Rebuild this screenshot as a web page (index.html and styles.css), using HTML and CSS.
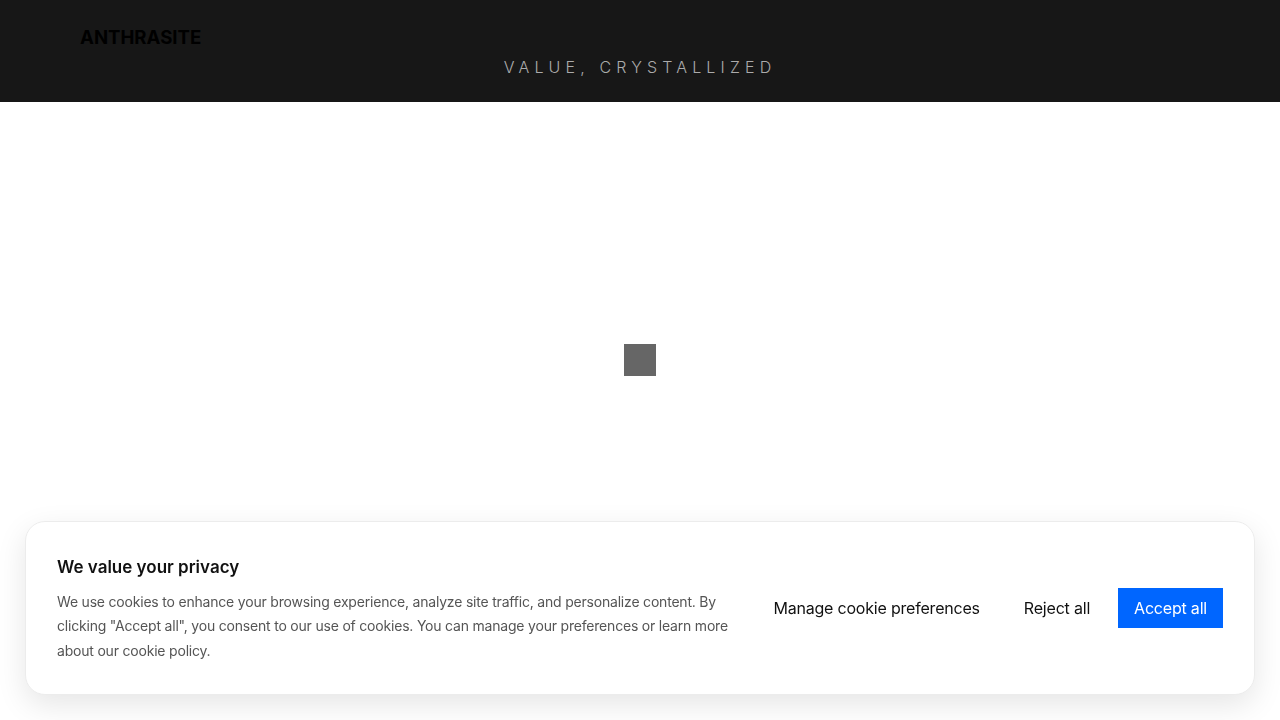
FILE: index.html
```html
<!DOCTYPE html>
<html lang="en">
<head>
<meta charset="utf-8">
<title>Anthrasite</title>
<link rel="stylesheet" href="styles.css">
</head>
<body>
<header class="site-header">
  <div class="logo">ANTHRASITE</div>
  <div class="tagline">VALUE, CRYSTALLIZED</div>
</header>
<main class="main">
  <div class="loader"></div>
</main>
<section class="cookie-banner">
  <div class="cookie-text">
    <h2 class="cookie-title">We value your privacy</h2>
    <p class="cookie-body">We use cookies to enhance your browsing experience, analyze site traffic, and personalize content. By clicking "Accept all", you consent to our use of cookies. You can manage your preferences or learn more about our cookie policy.</p>
  </div>
  <div class="cookie-actions">
    <button class="btn btn-link">Manage cookie preferences</button>
    <button class="btn btn-link">Reject all</button>
    <button class="btn btn-primary">Accept all</button>
  </div>
</section>
</body>
</html>
```
FILE: styles.css
```css
* { box-sizing: border-box; }
html, body { margin: 0; padding: 0; }
body {
  font-family: Inter, "Noto Sans", sans-serif;
  background: #fff;
  color: #111;
  height: 720px;
  overflow: hidden;
}
.site-header {
  background: #171717;
  height: 102px;
  padding: 24px 80px 0;
}
.logo {
  font-size: 18.6px;
  font-weight: 700;
  line-height: 27px;
  color: #000;
}
.tagline {
  margin-top: 4px;
  text-align: center;
  font-size: 16px;
  font-weight: 300;
  line-height: 24px;
  letter-spacing: 5.15px;
  color: #ababab;
}
.main {
  display: flex;
  justify-content: center;
  padding-top: 242px;
}
.loader {
  width: 32px;
  height: 32px;
  background: #666;
}
.cookie-banner {
  position: fixed;
  left: 25px;
  right: 25px;
  bottom: 25px;
  background: #fff;
  border: 1px solid #ececec;
  border-radius: 20px;
  box-shadow: 0 10px 30px rgba(0,0,0,0.10);
  padding: 33px 31px 31px 31px;
  display: flex;
  align-items: center;
  gap: 24px;
}
.cookie-text { flex: 1; min-width: 0; }
.cookie-title {
  margin: 0 0 11px;
  font-size: 17px;
  font-weight: 600;
  line-height: 24px;
  color: #111;
}
.cookie-body {
  margin: 0;
  font-size: 14px;
  line-height: 24.5px;
  letter-spacing: -0.2px;
  color: #555;
}
.cookie-actions {
  display: flex;
  align-items: center;
  gap: 12px;
  flex-shrink: 0;
  padding-bottom: 2px;
}
.btn {
  font-family: Inter, "Noto Sans", sans-serif;
  font-size: 16px;
  line-height: 24px;
  letter-spacing: -0.2px;
  padding: 8px 16px;
  border: none;
  background: transparent;
  color: #111;
  cursor: pointer;
}
.btn-primary {
  background: #0066ff;
  color: #fff;
}
```
